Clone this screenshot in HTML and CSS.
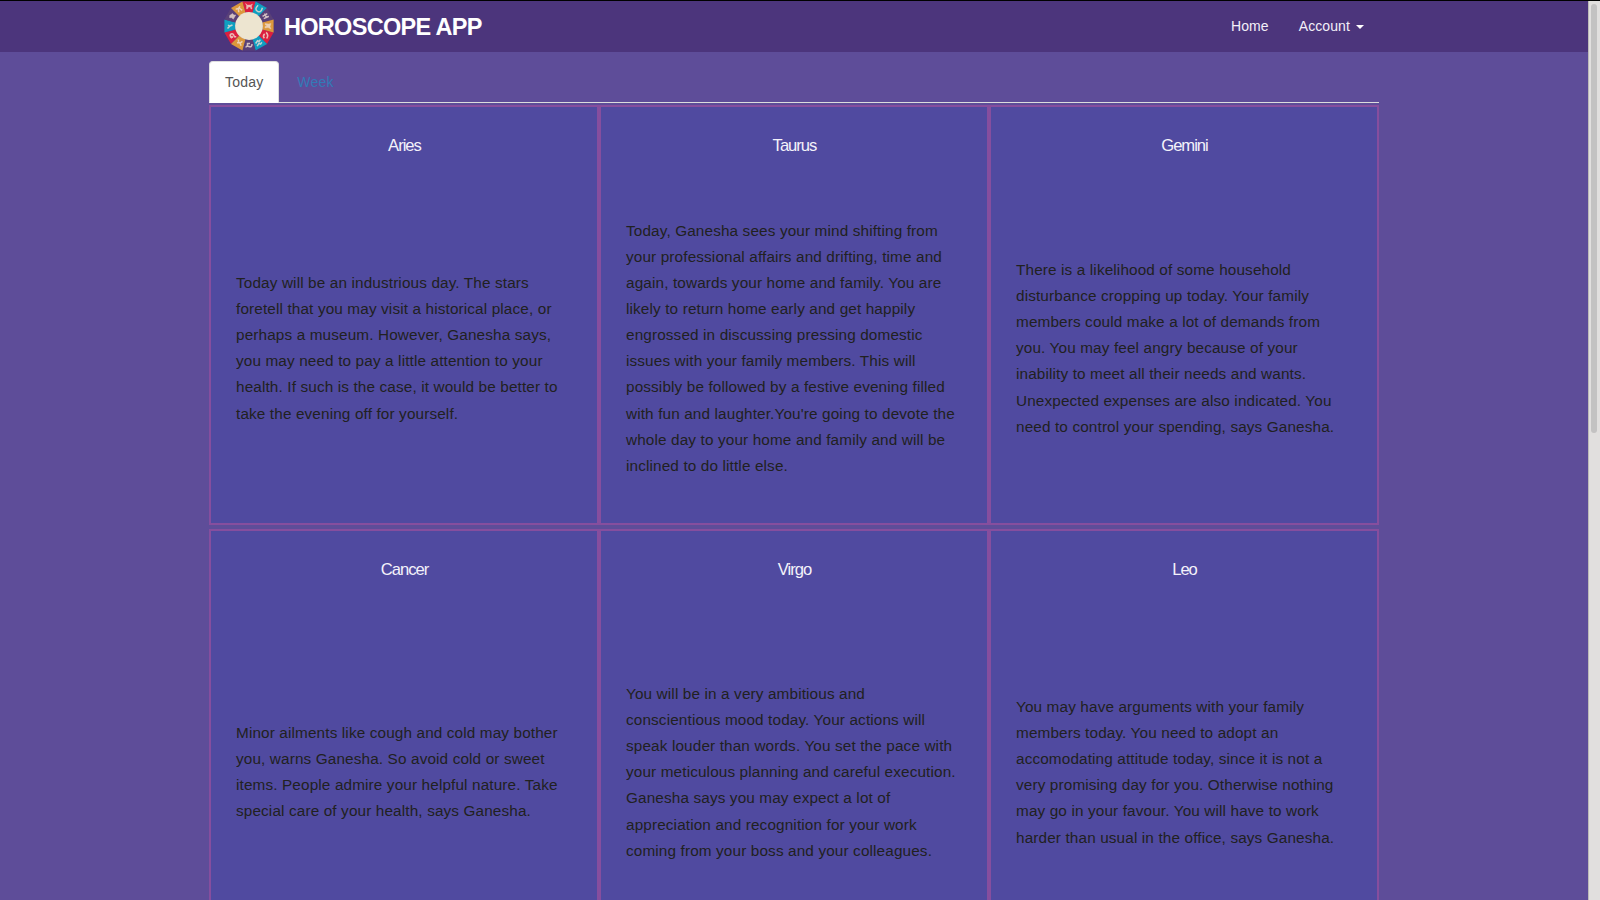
FILE: index.html
```html
<!DOCTYPE html>
<html lang="en">
<head>
<meta charset="utf-8">
<title>Horoscope App</title>
<link rel="stylesheet" href="styles.css">
</head>
<body>
<div class="viewport">
  <div class="page">
    <nav class="navbar">
      <div class="container navbar-inner">
        <a class="brand">
          <svg class="logo" viewBox="-25 -25 50 50">
            <defs>
              <path id="seg" d="M-6.6-24.6H6.6L3.6-13.4H-3.6Z"/>
            </defs>
            <g fill="#dc1f3f"><use href="#seg"/><use href="#seg" transform="rotate(120)"/><use href="#seg" transform="rotate(240)"/></g>
            <g fill="#0f9fc0"><use href="#seg" transform="rotate(30)"/><use href="#seg" transform="rotate(150)"/><use href="#seg" transform="rotate(270)"/></g>
            <g fill="#594078"><use href="#seg" transform="rotate(60)"/><use href="#seg" transform="rotate(180)"/><use href="#seg" transform="rotate(300)"/></g>
            <g fill="#dc983c"><use href="#seg" transform="rotate(90)"/><use href="#seg" transform="rotate(210)"/><use href="#seg" transform="rotate(330)"/></g>
            <circle r="13.9" fill="#ede5d0"/>
            <g class="signs">
              <path class="solid" d="M-3.500-22.500l2 1.500h3l2-1-1 2 .5 3h-1l-.8-2h-1.700l-1 2h-1v-3.500z"/>
              <path transform="rotate(30)" d="M-2.500-22.500q-1.500 5.500 2.500 5.500t2.500-5.500"/>
              <path transform="rotate(60)" d="M-1.500-22v5.500M1.500-22l-.5 5.500M-3-19.500h5"/>
              <path class="solid" transform="rotate(90)" d="M-2.500-22l3 1 2.500-1-1.500 3 .5 3h-1.500l-.5-2-1.500 2h-1l.5-3.500z"/>
              <path transform="rotate(120)" d="M-3-18q1-4 5-3.500M-1-17.500q3 1 4-2"/>
              <path transform="rotate(150)" d="M-3-20.500l2-1 1 1.500 3-1.500M-3-17.500l2-1 1 1.500 3-1.500"/>
              <path transform="rotate(180)" d="M-3-18q0-3.500 3-2.500t3-1M-1-17.500h2.500v-2"/>
              <path transform="rotate(210)" d="M-3-21l2.500 2 2.500-1.500M-1-19l-1 2.500M1-19l1.500 2"/>
              <path transform="rotate(240)" d="M-2-21q4-1 4 1.500t-4 1.500l-1 1.500M0-19.500l-2-1"/>
              <path transform="rotate(270)" d="M-2.500-21.500l2.500 2.500 1 2.500M1-21l-1.500 2"/>
              <path class="solid" transform="rotate(300)" d="M-2.500-21l2-1 3 1.500-.5 2 1 1.500h-5l.5-2z"/>
              <path transform="rotate(330)" d="M-3-21.500q2 2 5 0M-.5-20.500l-1.500 3.500M.5-20.500l1.500 3.500"/>
            </g>
          </svg>
          <span class="brand-name">HOROSCOPE APP</span>
        </a>
        <div class="nav-links">
          <a>Home</a>
          <a>Account<span class="caret"></span></a>
        </div>
      </div>
    </nav>
    <main class="container">
      <div class="tabs">
        <a class="tab active">Today</a>
        <a class="tab">Week</a>
      </div>
      <div class="signs-grid">
        <section class="card"><h2>Aries</h2><div class="body"><p>Today will be an industrious day. The stars<br>foretell that you may visit a historical place, or<br>perhaps a museum. However, Ganesha says,<br>you may need to pay a little attention to your<br>health. If such is the case, it would be better to<br>take the evening off for yourself.</p></div></section>
        <section class="card"><h2>Taurus</h2><div class="body"><p>Today, Ganesha sees your mind shifting from<br>your professional affairs and drifting, time and<br>again, towards your home and family. You are<br>likely to return home early and get happily<br>engrossed in discussing pressing domestic<br>issues with your family members. This will<br>possibly be followed by a festive evening filled<br>with fun and laughter.You're going to devote the<br>whole day to your home and family and will be<br>inclined to do little else.</p></div></section>
        <section class="card"><h2>Gemini</h2><div class="body"><p>There is a likelihood of some household<br>disturbance cropping up today. Your family<br>members could make a lot of demands from<br>you. You may feel angry because of your<br>inability to meet all their needs and wants.<br>Unexpected expenses are also indicated. You<br>need to control your spending, says Ganesha.</p></div></section>
        <section class="card"><h2>Cancer</h2><div class="body"><p>Minor ailments like cough and cold may bother<br>you, warns Ganesha. So avoid cold or sweet<br>items. People admire your helpful nature. Take<br>special care of your health, says Ganesha.</p></div></section>
        <section class="card"><h2>Virgo</h2><div class="body"><p>You will be in a very ambitious and<br>conscientious mood today. Your actions will<br>speak louder than words. You set the pace with<br>your meticulous planning and careful execution.<br>Ganesha says you may expect a lot of<br>appreciation and recognition for your work<br>coming from your boss and your colleagues.</p></div></section>
        <section class="card"><h2>Leo</h2><div class="body"><p>You may have arguments with your family<br>members today. You need to adopt an<br>accomodating attitude today, since it is not a<br>very promising day for you. Otherwise nothing<br>may go in your favour. You will have to work<br>harder than usual in the office, says Ganesha.</p></div></section>
      </div>
    </main>
  </div>
  <div class="scrollbar"><div class="thumb"></div></div>
</div>
</body>
</html>
```

FILE: styles.css
```css
* { box-sizing: border-box; }
body {
  margin: 0;
  overflow: hidden;
  font-family: "Liberation Sans", Arial, sans-serif;
  font-size: 14px;
  line-height: 20px;
}
.viewport {
  display: flex;
  width: 1600px;
  height: 900px;
  border-top: 1px solid #000;
  overflow: hidden;
}
.page {
  flex: 1;
  min-width: 0;
  background: #5e4d99;
}
.container {
  width: 1170px;
  margin: 0 auto;
}
.navbar {
  height: 51px;
  background: #4c357c;
}
.navbar-inner {
  display: flex;
  justify-content: space-between;
  padding: 0 15px;
}
.brand {
  display: flex;
  align-items: center;
  gap: 10px;
  height: 50px;
}
.logo {
  width: 50px;
  height: 50px;
}
.signs path {
  fill: none;
  stroke: #f0dfd3;
  stroke-width: 1.5;
  opacity: .8;
}
.signs .solid {
  fill: #f0dfd3;
  stroke-width: .4;
}
.brand-name {
  padding-top: 1px;
  color: #fff;
  font-size: 23.5px;
  font-weight: bold;
  letter-spacing: -.7px;
}
.nav-links {
  display: flex;
  gap: 30px;
  padding: 15px 0;
  color: #f3eff8;
  letter-spacing: .1px;
}
.caret {
  display: inline-block;
  margin-left: 6px;
  vertical-align: middle;
  border-top: 4px solid #fff;
  border-left: 4px solid transparent;
  border-right: 4px solid transparent;
}
.tabs {
  display: flex;
  gap: 2px;
  margin-top: 9px;
  height: 42px;
  border-bottom: 1px solid #ddd;
}
.tab {
  height: 42px;
  padding: 10px 15px;
  border: 1px solid transparent;
  border-radius: 4px 4px 0 0;
  color: #337ab7;
  letter-spacing: .2px;
}
.tab.active {
  background: #fff;
  border-color: #ddd;
  border-bottom-color: #fff;
  color: #555;
}
.signs-grid {
  display: grid;
  grid-template-columns: repeat(3, 390px);
  grid-auto-rows: 420px;
  row-gap: 4px;
  margin-top: 2px;
}
.card {
  display: flex;
  flex-direction: column;
  padding: 29px 25px 0;
  border: 2px solid #864e9e;
  background: #504aa0;
}
.card h2 {
  margin: 0;
  color: #f4f2fa;
  font-size: 16.6px;
  font-weight: normal;
  line-height: 20px;
  letter-spacing: -1px;
  text-align: center;
  text-indent: 1px;
}
.body {
  display: flex;
  flex: 1;
  align-items: center;
  padding-top: 17.8px;
}
.body p {
  margin: 0;
  color: #212121;
  font-size: 15.3px;
  line-height: 26.1px;
  letter-spacing: .14px;
  white-space: nowrap;
}
.scrollbar {
  width: 12px;
  padding: 3px 3px 0 2px;
  border-left: 1px solid #bdbbb8;
  background: #e1dfde;
}
.thumb {
  height: 429px;
  border-radius: 3px;
  background: #c3c2c2;
}
```
